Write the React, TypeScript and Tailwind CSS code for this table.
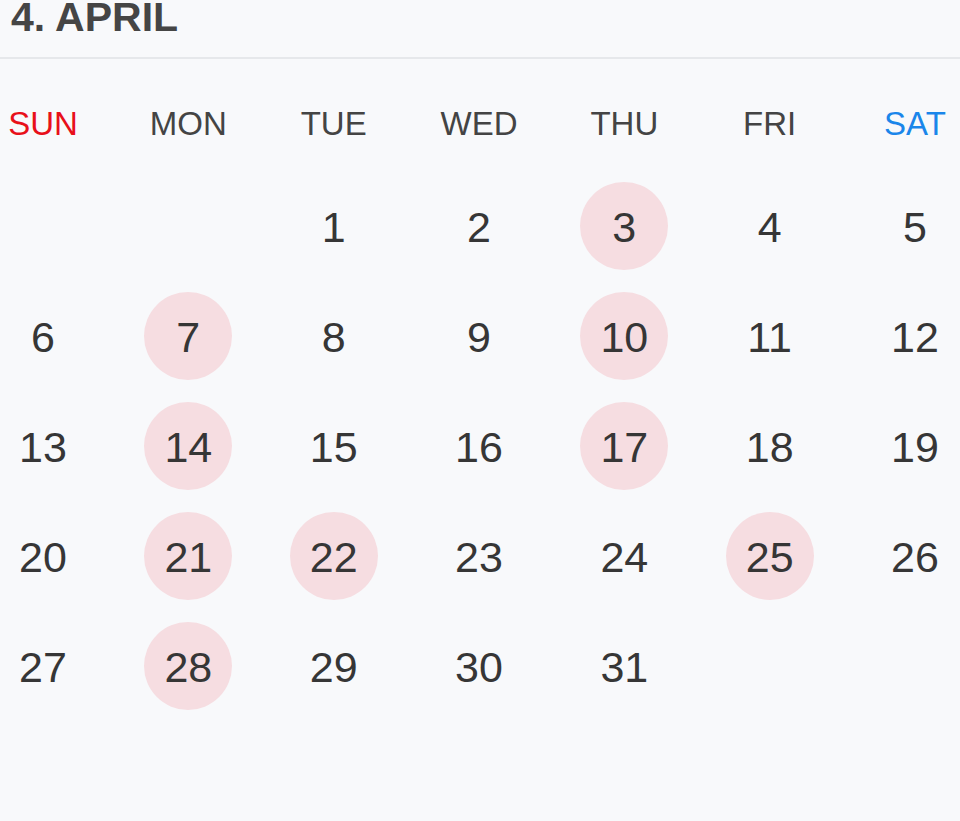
const weekdays = [
  { label: 'SUN', color: 'text-[#e8101a]' },
  { label: 'MON', color: 'text-[#444444]' },
  { label: 'TUE', color: 'text-[#444444]' },
  { label: 'WED', color: 'text-[#444444]' },
  { label: 'THU', color: 'text-[#444444]' },
  { label: 'FRI', color: 'text-[#444444]' },
  { label: 'SAT', color: 'text-[#1a86ea]' },
];

// April starts on Tuesday
const firstOffset = 2;
const daysInMonth = 31;
const marked = [3, 7, 10, 14, 17, 21, 22, 25, 28];

export default function App() {
  const cells: (number | null)[] = [];
  for (let i = 0; i < firstOffset; i++) cells.push(null);
  for (let d = 1; d <= daysInMonth; d++) cells.push(d);
  while (cells.length % 7 !== 0) cells.push(null);

  const weeks: (number | null)[][] = [];
  for (let i = 0; i < cells.length; i += 7) weeks.push(cells.slice(i, i + 7));

  return (
    <div className="w-[960px] h-[821px] overflow-hidden bg-[#f8f9fb] font-['Liberation_Sans',Arial,sans-serif]">
      <div className="h-[59px] flex flex-col border-b-2 border-[#e6e8eb] px-[11px]">
        <h1 className="mt-[-3px] text-[41px] leading-none font-bold text-[#454545]">4. APRIL</h1>
      </div>

      <div className="ml-[-1px] mr-[1px] flex justify-between items-center h-[112px] pt-[16px]">
        {weekdays.map((w) => (
          <div key={w.label} className={`w-[88px] text-center text-[33px] leading-none ${w.color}`}>
            {w.label}
          </div>
        ))}
      </div>

      {weeks.map((week, wi) => (
        <div key={wi} className="ml-[-1px] mr-[1px] flex justify-between items-center h-[110px]">
          {week.map((day, di) => (
            <div key={di} className="w-[88px] h-[88px] flex items-center justify-center">
              {day !== null && (
                <div
                  className={
                    marked.includes(day)
                      ? 'w-[88px] h-[88px] pt-[2px] rounded-full bg-[#f6dde1] flex items-center justify-center text-[43px] leading-none text-[#363636]'
                      : 'w-[88px] h-[88px] pt-[2px] flex items-center justify-center text-[43px] leading-none text-[#363636]'
                  }
                >
                  {day}
                </div>
              )}
            </div>
          ))}
        </div>
      ))}
    </div>
  );
}
